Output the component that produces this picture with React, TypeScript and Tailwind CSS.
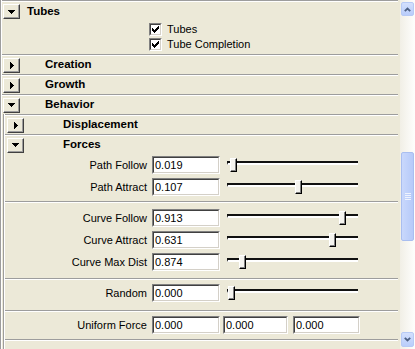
import React from 'react';

interface Field {
  label: string;
  value: string;
  thumb: number;
}

const Separator: React.FC = () => (
  <div className="h-[2px] border-t border-t-[#9D9D9D] border-b border-b-white" />
);

const Arrow: React.FC<{ open: boolean }> = ({ open }) =>
  open ? (
    <svg width="7" height="4" viewBox="0 0 7 4" shapeRendering="crispEdges">
      <path d="M0 0h7v1h-1v1h-1v1h-1v1h-1v-1h-1v-1h-1v-1h-1z" fill="#000" />
    </svg>
  ) : (
    <svg width="4" height="7" viewBox="0 0 4 7" shapeRendering="crispEdges">
      <path d="M0 0h1v1h1v1h1v1h1v1h-1v1h-1v1h-1v1h-1z" fill="#000" />
    </svg>
  );

const Toggle: React.FC<{ open: boolean; className?: string }> = ({ open, className = '' }) => (
  <div
    className={`w-[17px] h-[15px] flex items-center justify-center bg-[#ECE9D8] border border-t-white border-l-white border-r-[#404040] border-b-[#404040] shadow-[inset_-1px_-1px_0_#9D9D9D] ${className}`}
  >
    <Arrow open={open} />
  </div>
);

const Header: React.FC<{ title: string; open: boolean; btn: string; label: string; height?: string }> = ({
  title,
  open,
  btn,
  label,
  height = 'h-[18px]',
}) => (
  <>
    <Separator />
    <div className={`flex items-center ${height}`}>
      <Toggle open={open} className={btn} />
      <span className={`font-bold text-[11.5px] leading-none ${label}`}>{title}</span>
    </div>
  </>
);

const Checkbox: React.FC<{ label: string }> = ({ label }) => (
  <div className="flex items-center h-[15px]">
    <div className="w-[13px] h-[13px] border border-t-[#808080] border-l-[#808080] border-r-white border-b-white">
      <div className="w-full h-full flex items-center justify-center bg-white border border-t-[#404040] border-l-[#404040] border-r-[#D4D0C8] border-b-[#D4D0C8]">
        <svg width="7" height="7" viewBox="0 0 7 7" shapeRendering="crispEdges">
          <path d="M6 0h1v3h-1v1h-1v1h-1v1h-1v1h-1v-1h-1v-1h-1v-3h1v1h1v1h1v-1h1v-1h1z" fill="#000" />
        </svg>
      </div>
    </div>
    <span className="ml-[5px] leading-none">{label}</span>
  </div>
);

const Input: React.FC<{ value: string; width: string; className?: string }> = ({ value, width, className = '' }) => (
  <div className={`h-[18px] ${width} border border-t-[#808080] border-l-[#808080] border-r-white border-b-white ${className}`}>
    <div className="h-full flex items-center pl-[1px] bg-white border border-t-[#404040] border-l-[#404040] border-r-[#D4D0C8] border-b-[#D4D0C8] leading-none">
      {value}
    </div>
  </div>
);

const Slider: React.FC<{ thumb: number }> = ({ thumb }) => (
  <div className="relative w-[131px] h-[18px] ml-[7px]">
    <div className="absolute left-0 right-0 top-[5px] h-[4px] border-t-2 border-t-[#111] border-l border-l-[#111] border-b-2 border-b-white" />
    <div
      className="absolute top-[2px] w-[7px] h-[14px] bg-[#F5F4EF] border border-t-white border-l-white border-r-black border-b-black shadow-[inset_-1px_-1px_0_#808080]"
      style={{ left: thumb }}
    />
  </div>
);

const Row: React.FC<{ field: Field }> = ({ field }) => (
  <div className="flex items-center h-[18px]">
    <div className="w-[142px] text-right leading-none">{field.label}</div>
    <Input value={field.value} width="w-[68px]" className="ml-[5px]" />
    <Slider thumb={field.thumb} />
  </div>
);

const pathFields: Field[] = [
  { label: 'Path Follow', value: '0.019', thumb: 3 },
  { label: 'Path Attract', value: '0.107', thumb: 68 },
];

const curveFields: Field[] = [
  { label: 'Curve Follow', value: '0.913', thumb: 112 },
  { label: 'Curve Attract', value: '0.631', thumb: 102 },
  { label: 'Curve Max Dist', value: '0.874', thumb: 12 },
];

const ScrollButton: React.FC<{ up?: boolean; className?: string }> = ({ up, className = '' }) => (
  <div
    className={`w-[13px] flex items-center justify-center rounded-[2px] border border-[#B7CAF5] bg-gradient-to-b from-[#D3E0FD] to-[#B9CDFB] ${className}`}
  >
    <svg width="7" height="5" viewBox="0 0 7 5">
      <path
        d={up ? 'M0.8 4.2 L3.5 1.5 L6.2 4.2' : 'M0.8 0.8 L3.5 3.5 L6.2 0.8'}
        fill="none"
        stroke="#4D6185"
        strokeWidth="1.8"
      />
    </svg>
  </div>
);

const App: React.FC = () => {
  return (
    <div className="flex w-[415px] h-[349px] overflow-hidden bg-[#ECE9D8] text-black text-[11px] font-['Liberation_Sans',Arial,sans-serif]">
      <div className="w-[400px] flex flex-col">
        <div className="h-[2px] bg-black" />
        <div className="w-[398px] flex-1 border-l border-l-[#9D9D9D]">
          <div className="h-full border-l border-l-white">
            <Header title="Tubes" open btn="ml-[1px]" label="ml-[7px]" height="h-[19px]" />
            <div className="h-[33px] pt-[1px] pl-[147px] flex flex-col">
              <Checkbox label="Tubes" />
              <Checkbox label="Tube Completion" />
            </div>
            <Header title="Creation" open={false} btn="ml-[1px]" label="ml-[25px]" />
            <Header title="Growth" open={false} btn="ml-[1px]" label="ml-[25px]" />
            <Header title="Behavior" open btn="ml-[1px]" label="ml-[25px]" />

            <div className="ml-[1px] border-l border-l-[#9D9D9D]">
              <div className="border-l border-l-white">
                <Header title="Displacement" open={false} btn="ml-[2px]" label="ml-[39px]" />
                <Header title="Forces" open btn="ml-[2px]" label="ml-[39px]" />

                <div className="flex flex-col gap-[4px] pt-[2px] pb-[5px]">
                  {pathFields.map((f) => (
                    <Row key={f.label} field={f} />
                  ))}
                </div>
                <Separator />
                <div className="flex flex-col gap-[4px] pt-[6px] pb-[7px]">
                  {curveFields.map((f) => (
                    <Row key={f.label} field={f} />
                  ))}
                </div>
                <Separator />
                <div className="flex flex-col pt-[4px] pb-[8px]">
                  <Row field={{ label: 'Random', value: '0.000', thumb: 1 }} />
                </div>
                <Separator />
                <div className="flex flex-col pt-[4px] pb-[5px]">
                  <div className="flex items-center h-[18px]">
                    <div className="w-[142px] text-right leading-none">Uniform Force</div>
                    <Input value="0.000" width="w-[68px]" className="ml-[5px]" />
                    <Input value="0.000" width="w-[65px]" className="ml-[3px]" />
                    <Input value="0.000" width="w-[67px]" className="ml-[5px]" />
                  </div>
                </div>
                <Separator />
                <div className="h-[20px]" />
              </div>
            </div>
          </div>
        </div>
      </div>

      <div className="w-[15px] h-full flex flex-col items-center pt-[2px] pb-[2px] bg-gradient-to-r from-[#F1EFE6] to-[#FEFEFD]">
        <ScrollButton up className="h-[14px]" />
        <div className="mt-[136px] h-[89px] w-[13px] flex items-center justify-center rounded-[2px] border border-[#A9BEF0] bg-gradient-to-r from-[#C9D8FC] to-[#B6CAF9]">
          <div className="flex flex-col gap-[1px]">
            <div className="w-[6px] h-[1px] bg-[#EEF3FE]" />
            <div className="w-[6px] h-[1px] bg-[#EEF3FE]" />
            <div className="w-[6px] h-[1px] bg-[#EEF3FE]" />
            <div className="w-[6px] h-[1px] bg-[#EEF3FE]" />
          </div>
        </div>
        <div className="flex-1" />
        <ScrollButton className="h-[15px]" />
      </div>
    </div>
  );
};

export default App;
